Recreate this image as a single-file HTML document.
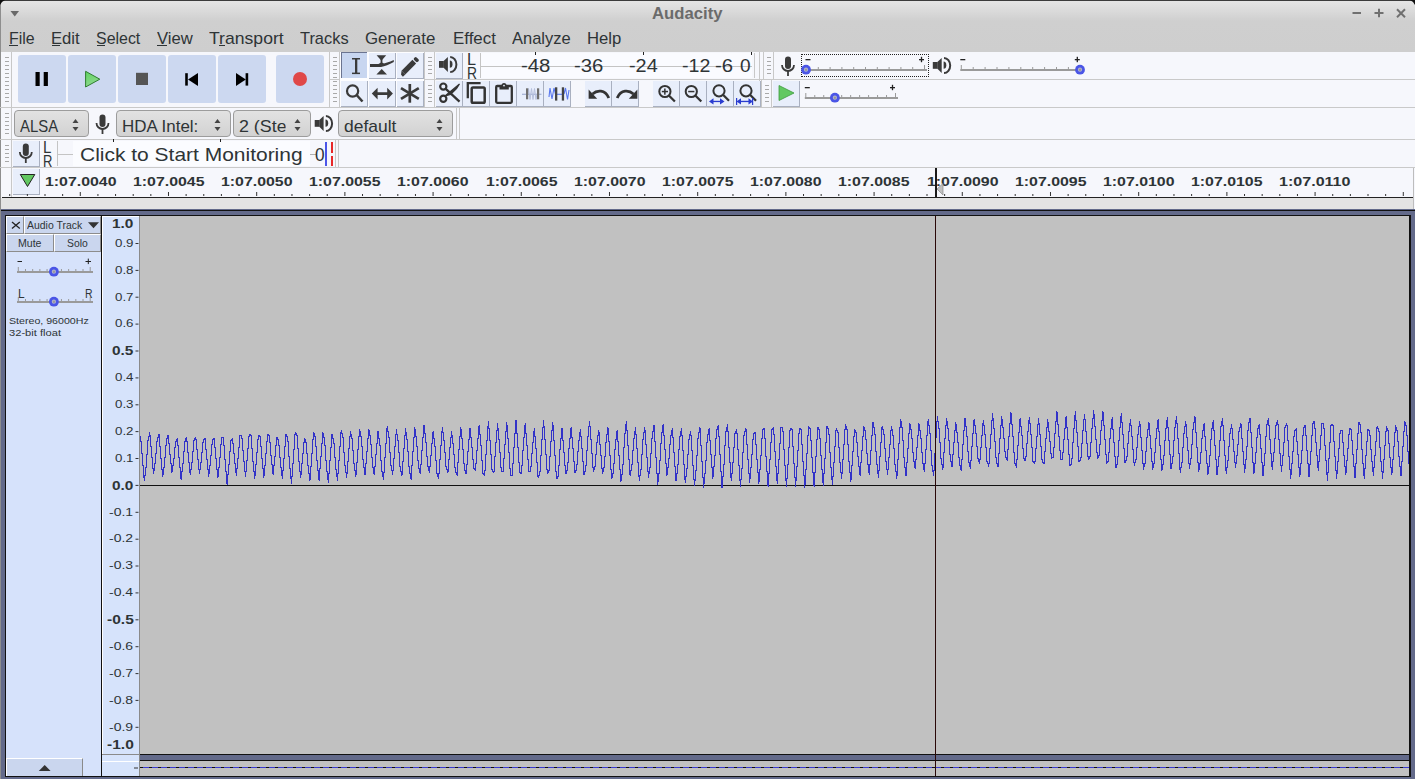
<!DOCTYPE html>
<html><head><meta charset="utf-8"><title>Audacity</title>
<style>
*{margin:0;padding:0;box-sizing:border-box}
html,body{width:1415px;height:779px;overflow:hidden}
body{position:relative;font-family:"Liberation Sans",sans-serif;background:#f6f7fc}
.a{position:absolute}
.t{position:absolute;white-space:pre;transform-origin:0 50%}
.tb{position:absolute;background:#ccd8f0;border-radius:3px}
.tbtn{position:absolute;background:#e8eefb;border-right:1px solid #a9b0c0;border-bottom:1px solid #a9b0c0}
.grab{position:absolute;width:6px;background:repeating-linear-gradient(to bottom,#a8a8a8 0 1px,transparent 1px 4px)}
.vl{position:absolute;width:1px;background:#c8c8c8}
.hl{position:absolute;height:1px;background:#c8c8c8}
.combo{position:absolute;border:1px solid #9c9c9c;border-radius:4px;background:linear-gradient(#e2e2e2,#d2d2d2)}
svg{position:absolute;overflow:visible}
</style></head><body>
<div class="a" style="left:0;top:0;width:1415px;height:52px;background:linear-gradient(#e6e6e6 0px,#e1e1e1 5px,#cfcfcf 21px,#cecece 52px)"></div>
<div class="a" style="left:0;top:0;width:1415px;height:1px;background:#3c3c3c"></div>
<div class="a" style="left:0;top:0;width:1px;height:779px;background:#8e8e8e"></div>
<svg style="left:0;top:0" width="30" height="30"><polygon points="10.5,11 19,11 14.75,16.5" fill="#6a6a6a"/></svg>
<div class="t" style="left:651.50px;top:4.81px;font-size:17px;line-height:17px;font-weight:bold;color:#6b6b6b;transform:scaleX(0.9819);">Audacity</div>
<svg style="left:1340px;top:0" width="75" height="30"><g stroke="#707070" stroke-width="2" fill="none"><line x1="12.5" y1="13" x2="21" y2="13"/><line x1="34.5" y1="13" x2="43.5" y2="13"/><line x1="39" y1="8.8" x2="39" y2="17.2"/><line x1="57" y1="9.3" x2="65" y2="17.3"/><line x1="65" y1="9.3" x2="57" y2="17.3"/></g></svg>
<div class="t" style="left:9.30px;top:30.31px;font-size:17px;line-height:17px;font-weight:normal;color:#2e3436;transform:scaleX(0.9377);">File</div>
<div class="a" style="left:9px;top:45px;width:9px;height:1px;background:#2e3436"></div>
<div class="t" style="left:51.30px;top:30.31px;font-size:17px;line-height:17px;font-weight:normal;color:#2e3436;transform:scaleX(0.9796);">Edit</div>
<div class="a" style="left:51.5px;top:45px;width:8.5px;height:1px;background:#2e3436"></div>
<div class="t" style="left:96.40px;top:30.31px;font-size:17px;line-height:17px;font-weight:normal;color:#2e3436;transform:scaleX(0.9376);">Select</div>
<div class="a" style="left:96.5px;top:45px;width:8.5px;height:1px;background:#2e3436"></div>
<div class="t" style="left:157.00px;top:30.31px;font-size:17px;line-height:17px;font-weight:normal;color:#2e3436;transform:scaleX(0.9796);">View</div>
<div class="a" style="left:157px;top:45px;width:9.5px;height:1px;background:#2e3436"></div>
<div class="t" style="left:209.30px;top:30.31px;font-size:17px;line-height:17px;font-weight:normal;color:#2e3436;transform:scaleX(1.0357);">Transport</div>
<div class="a" style="left:219px;top:45px;width:6px;height:1px;background:#2e3436"></div>
<div class="t" style="left:300.00px;top:30.31px;font-size:17px;line-height:17px;font-weight:normal;color:#2e3436;transform:scaleX(0.9648);">Tracks</div>
<div class="t" style="left:365.40px;top:30.31px;font-size:17px;line-height:17px;font-weight:normal;color:#2e3436;transform:scaleX(0.9917);">Generate</div>
<div class="t" style="left:452.50px;top:30.31px;font-size:17px;line-height:17px;font-weight:normal;color:#2e3436;transform:scaleX(0.9941);">Effect</div>
<div class="t" style="left:511.90px;top:30.31px;font-size:17px;line-height:17px;font-weight:normal;color:#2e3436;transform:scaleX(0.9705);">Analyze</div>
<div class="t" style="left:587.00px;top:30.31px;font-size:17px;line-height:17px;font-weight:normal;color:#2e3436;transform:scaleX(0.9809);">Help</div>
<div class="hl" style="left:330px;top:79px;width:1085px;background:#c9c9c9"></div>
<div class="hl" style="left:0;top:107px;width:1415px;background:#c9c9c9"></div>
<div class="hl" style="left:0;top:139px;width:1415px;background:#c9c9c9"></div>
<div class="hl" style="left:0;top:167px;width:1415px;background:#c9c9c9"></div>
<div class="grab" style="left:5px;top:57px;height:46px;width:4px"></div>
<div class="vl" style="left:11px;top:52px;height:55px"></div>
<div class="tb" style="left:18px;top:55px;width:48px;height:48px"></div>
<div class="tb" style="left:68px;top:55px;width:48px;height:48px"></div>
<div class="tb" style="left:118px;top:55px;width:48px;height:48px"></div>
<div class="tb" style="left:168px;top:55px;width:48px;height:48px"></div>
<div class="tb" style="left:218px;top:55px;width:48px;height:48px"></div>
<div class="tb" style="left:276px;top:55px;width:48px;height:48px"></div>
<div class="vl" style="left:329px;top:52px;height:55px"></div>
<svg style="left:0;top:0" width="330" height="107"><rect x="35.5" y="72" width="4.2" height="14" fill="#000"/><rect x="43.7" y="72" width="4.2" height="14" fill="#000"/><defs><linearGradient id="gg" x1="0" y1="0" x2="0.3" y2="1"><stop offset="0" stop-color="#5fd45f"/><stop offset="1" stop-color="#8ed88e"/></linearGradient></defs><polygon points="85.6,71.3 85.6,87 99.8,79.2" fill="url(#gg)" stroke="#2f7d2f" stroke-width="1"/><rect x="136" y="72.8" width="12" height="12.2" fill="#555"/><rect x="185.2" y="73.2" width="2.6" height="12.4" fill="#000"/><polygon points="188,79.4 198,73 198,86" fill="#000"/><polygon points="236,73 236,86 245.8,79.4" fill="#000"/><rect x="245.6" y="73.2" width="2.6" height="12.4" fill="#000"/><circle cx="300" cy="79" r="7" fill="#e04848"/></svg>
<div class="grab" style="left:333px;top:57px;height:47px;width:4px"></div>
<div class="vl" style="left:339px;top:52px;height:55px"></div>
<div class="a" style="left:340px;top:52px;width:85px;height:55px;background:#fdfdff"></div>
<div class="a" style="left:341px;top:52px;width:26px;height:26px;background:#c8d6f0;border-top:1px solid #6b7490;border-left:1px solid #6b7490"></div>
<div class="tbtn" style="left:369px;top:53px;width:27px;height:26px"></div>
<div class="tbtn" style="left:397px;top:53px;width:27px;height:26px"></div>
<div class="tbtn" style="left:341px;top:81px;width:27px;height:26px"></div>
<div class="tbtn" style="left:369px;top:81px;width:27px;height:26px"></div>
<div class="tbtn" style="left:397px;top:81px;width:27px;height:26px"></div>
<svg style="left:0;top:0" width="430" height="110"><g fill="#3a3a3a"><rect x="355" y="58.5" width="2.3" height="15.4"/><rect x="352" y="58" width="8" height="1.5"/><rect x="352" y="72.6" width="8" height="1.5"/><polygon points="376.6,55.3 386.2,55.3 381.4,60.7"/><polygon points="376.4,74.6 387,74.6 381.7,69"/><rect x="380.6" y="59" width="1.8" height="5"/><polygon points="378,64.2 381.5,62.3 385,64.2"/><path d="M370,64 L381,64 C385,63.5 389,62 393.8,60 L393.8,62 C389,64.5 385,66.5 381,67 L370,67 Z"/></g><g transform="translate(410.0,65.9) rotate(-45) scale(1.1)"><rect x="-8.5" y="-2.4" width="14" height="4.8" fill="#3a3a3a"/><polygon points="-8.5,-2.4 -11.5,0 -11.5,2.4 -8.5,2.4" fill="#3a3a3a"/><rect x="6.5" y="-2.4" width="3.2" height="4.8" rx="1.2" fill="#3a3a3a"/></g><circle cx="352.6" cy="91" r="5.6" fill="none" stroke="#3a3a3a" stroke-width="2.2"/><line x1="356.6" y1="95" x2="362.5" y2="101.5" stroke="#3a3a3a" stroke-width="2.6"/><polygon points="371.8,93.6 377.6,87.8 377.6,92.2 387.2,92.2 387.2,87.8 392.9,93.6 387.2,99.6 387.2,95 377.6,95 377.6,99.6" fill="#3a3a3a"/><g stroke="#3a3a3a" stroke-width="2.7"><line x1="409.8" y1="84" x2="409.8" y2="102.7"/><line x1="401" y1="88.2" x2="418.8" y2="98.8"/><line x1="401" y1="98.8" x2="418.8" y2="88.2"/></g></svg>
<div class="vl" style="left:424px;top:52px;height:55px"></div>
<div class="vl" style="left:434px;top:52px;height:55px"></div>
<div class="grab" style="left:428px;top:57px;height:18px;width:4px"></div>
<div class="grab" style="left:428px;top:85px;height:18px;width:4px"></div>
<div class="tbtn" style="left:436px;top:53px;width:27px;height:26px"></div>
<svg style="left:0;top:0" width="470" height="80"><g transform="translate(0,0)" fill="#3a3a3a"><rect x="439" y="61" width="4.8" height="6.8"/><polygon points="443.6,61 447.9,56.9 447.9,72 443.6,67.8"/><path d="M449.8,60.6 A2.7,3.6 0 0 1 449.8,67.8 Z"/><path d="M450.2,56.9 A6.2,7.6 0 0 1 450.2,72.1" fill="none" stroke="#3a3a3a" stroke-width="2"/></g></svg>
<div class="t" style="left:466.50px;top:51.96px;font-size:16px;line-height:16px;font-weight:normal;color:#2e3436;transform:scaleX(1.0105);">L</div>
<div class="t" style="left:466.50px;top:65.96px;font-size:16px;line-height:16px;font-weight:normal;color:#2e3436;transform:scaleX(0.8649);">R</div>
<div class="vl" style="left:480px;top:53px;height:25px;background:#c4c4c4"></div>
<div class="hl" style="left:480px;top:66px;width:272px;background:#c4c4c4"></div>
<div class="a" style="left:481px;top:53px;width:271px;height:13px;background:#fafbff"></div>
<div class="a" style="left:481px;top:67px;width:271px;height:11px;background:#fafbff"></div>
<div class="t" style="left:520.60px;top:56.66px;font-size:18px;line-height:18px;font-weight:normal;color:#2e3436;transform:scaleX(1.1301);">-48</div>
<div class="t" style="left:574.20px;top:56.66px;font-size:18px;line-height:18px;font-weight:normal;color:#2e3436;transform:scaleX(1.1301);">-36</div>
<div class="t" style="left:628.80px;top:56.66px;font-size:18px;line-height:18px;font-weight:normal;color:#2e3436;transform:scaleX(1.1032);">-24</div>
<div class="t" style="left:682.40px;top:56.66px;font-size:18px;line-height:18px;font-weight:normal;color:#2e3436;transform:scaleX(1.0878);">-12</div>
<div class="t" style="left:715.20px;top:56.66px;font-size:18px;line-height:18px;font-weight:normal;color:#2e3436;transform:scaleX(1.1301);">-6</div>
<div class="t" style="left:739.60px;top:56.66px;font-size:18px;line-height:18px;font-weight:normal;color:#2e3436;transform:scaleX(1.0583);">0</div>
<div class="a" style="left:535px;top:52px;width:1px;height:3px;background:#222"></div>
<div class="a" style="left:643px;top:52px;width:1px;height:3px;background:#222"></div>
<div class="a" style="left:751px;top:52px;width:1px;height:3px;background:#222"></div>
<div class="vl" style="left:754px;top:53px;height:25px"></div>
<div class="vl" style="left:759px;top:52px;height:55px"></div>
<div class="vl" style="left:763px;top:52px;height:27px"></div>
<div class="grab" style="left:767px;top:57px;height:18px;width:4px"></div>
<div class="vl" style="left:773px;top:52px;height:27px"></div>
<svg style="left:0;top:0" width="1100" height="110"><g transform="translate(788,66.5) scale(1.0)"><rect x="-3" y="-10" width="6" height="12.5" rx="3" fill="#3a3a3a"/><path d="M-6,-1.5 A6,6 0 0 0 6,-1.5" fill="none" stroke="#3a3a3a" stroke-width="1.8"/><rect x="-0.9" y="4" width="1.8" height="5.5" fill="#3a3a3a"/></g><g transform="translate(493.8,1.0)" fill="#3a3a3a"><rect x="439" y="61" width="4.8" height="6.8"/><polygon points="443.6,61 447.9,56.9 447.9,72 443.6,67.8"/><path d="M449.8,60.6 A2.7,3.6 0 0 1 449.8,67.8 Z"/><path d="M450.2,56.9 A6.2,7.6 0 0 1 450.2,72.1" fill="none" stroke="#3a3a3a" stroke-width="2"/></g></svg>
<div class="a" style="left:801px;top:54px;width:128px;height:23px;border:1px dotted #222"></div>
<svg style="left:0;top:0" width="1100" height="110"><rect x="805.50" y="69" width="121.50" height="2" fill="#9a9a9a"/><rect x="806.00" y="65" width="1" height="4" fill="#9a9a9a"/><rect x="817.80" y="67" width="1" height="2" fill="#9a9a9a"/><rect x="829.60" y="67" width="1" height="2" fill="#9a9a9a"/><rect x="841.40" y="67" width="1" height="2" fill="#9a9a9a"/><rect x="853.20" y="67" width="1" height="2" fill="#9a9a9a"/><rect x="865.00" y="67" width="1" height="2" fill="#9a9a9a"/><rect x="876.80" y="67" width="1" height="2" fill="#9a9a9a"/><rect x="888.60" y="67" width="1" height="2" fill="#9a9a9a"/><rect x="900.40" y="67" width="1" height="2" fill="#9a9a9a"/><rect x="912.20" y="67" width="1" height="2" fill="#9a9a9a"/><rect x="924.00" y="65" width="1" height="4" fill="#9a9a9a"/><rect x="805.50" y="59" width="5" height="1.3" fill="#222"/><rect x="919.00" y="59" width="5" height="1.3" fill="#222"/><rect x="920.85" y="56.8" width="1.3" height="5.4" fill="#222"/><circle cx="806" cy="69.7" r="4.9" fill="#4a55e6"/><circle cx="806" cy="69.7" r="2.1" fill="#b4b8d0"/><circle cx="806" cy="69.7" r="1.2" fill="#9a9a9a"/><rect x="960.30" y="69" width="122.50" height="2" fill="#9a9a9a"/><rect x="960.80" y="65" width="1" height="4" fill="#9a9a9a"/><rect x="972.70" y="67" width="1" height="2" fill="#9a9a9a"/><rect x="984.60" y="67" width="1" height="2" fill="#9a9a9a"/><rect x="996.50" y="67" width="1" height="2" fill="#9a9a9a"/><rect x="1008.40" y="67" width="1" height="2" fill="#9a9a9a"/><rect x="1020.30" y="67" width="1" height="2" fill="#9a9a9a"/><rect x="1032.20" y="67" width="1" height="2" fill="#9a9a9a"/><rect x="1044.10" y="67" width="1" height="2" fill="#9a9a9a"/><rect x="1056.00" y="67" width="1" height="2" fill="#9a9a9a"/><rect x="1067.90" y="67" width="1" height="2" fill="#9a9a9a"/><rect x="1079.80" y="65" width="1" height="4" fill="#9a9a9a"/><rect x="960.30" y="59" width="5" height="1.3" fill="#222"/><rect x="1074.80" y="59" width="5" height="1.3" fill="#222"/><rect x="1076.65" y="56.8" width="1.3" height="5.4" fill="#222"/><circle cx="1080" cy="69.7" r="4.9" fill="#4a55e6"/><circle cx="1080" cy="69.7" r="2.1" fill="#b4b8d0"/><circle cx="1080" cy="69.7" r="1.2" fill="#9a9a9a"/><rect x="804.80" y="97" width="93.20" height="2" fill="#9a9a9a"/><rect x="805.30" y="93" width="1" height="4" fill="#9a9a9a"/><rect x="814.27" y="95" width="1" height="2" fill="#9a9a9a"/><rect x="823.24" y="95" width="1" height="2" fill="#9a9a9a"/><rect x="832.21" y="95" width="1" height="2" fill="#9a9a9a"/><rect x="841.18" y="95" width="1" height="2" fill="#9a9a9a"/><rect x="850.15" y="95" width="1" height="2" fill="#9a9a9a"/><rect x="859.12" y="95" width="1" height="2" fill="#9a9a9a"/><rect x="868.09" y="95" width="1" height="2" fill="#9a9a9a"/><rect x="877.06" y="95" width="1" height="2" fill="#9a9a9a"/><rect x="886.03" y="95" width="1" height="2" fill="#9a9a9a"/><rect x="895.00" y="93" width="1" height="4" fill="#9a9a9a"/><rect x="804.80" y="87" width="5" height="1.3" fill="#222"/><rect x="890.00" y="87" width="5" height="1.3" fill="#222"/><rect x="891.85" y="84.8" width="1.3" height="5.4" fill="#222"/><circle cx="834.9" cy="97.7" r="4.9" fill="#4a55e6"/><circle cx="834.9" cy="97.7" r="2.1" fill="#b4b8d0"/><circle cx="834.9" cy="97.7" r="1.2" fill="#9a9a9a"/></svg>
<div class="tbtn" style="left:436px;top:81px;width:27px;height:26px"></div>
<div class="tbtn" style="left:463px;top:81px;width:27px;height:26px"></div>
<div class="tbtn" style="left:490px;top:81px;width:27px;height:26px"></div>
<div class="tbtn" style="left:517px;top:81px;width:27px;height:26px"></div>
<div class="tbtn" style="left:544px;top:81px;width:27px;height:26px"></div>
<div class="tbtn" style="left:585px;top:81px;width:27px;height:26px"></div>
<div class="tbtn" style="left:612px;top:81px;width:27px;height:26px"></div>
<svg style="left:0;top:0" width="660" height="110"><g fill="none" stroke="#333" stroke-width="2.2"><circle cx="443.3" cy="86.6" r="3.1"/><circle cx="443.3" cy="98.8" r="3.1"/></g><line x1="445.5" y1="88.6" x2="459.5" y2="101.7" stroke="#333" stroke-width="2.3"/><polygon points="445,96 459.5,84 456.5,88.5 450.5,94.5" fill="#333" stroke="#333" stroke-width="1.2"/><path d="M467.8,98.2 L467.8,83.2 L480.6,83.2" fill="none" stroke="#333" stroke-width="2.3"/><rect x="471.7" y="87.5" width="13" height="15.3" rx="1.3" fill="none" stroke="#333" stroke-width="2.5"/><rect x="496.2" y="86" width="15.6" height="16.8" rx="1" fill="none" stroke="#333" stroke-width="2.3"/><rect x="499.5" y="85.5" width="9.3" height="4" fill="#333"/><circle cx="504" cy="85.6" r="2.5" fill="#333"/><circle cx="504" cy="85.6" r="0.9" fill="#e8eefb"/><line x1="522" y1="94.3" x2="541.5" y2="94.3" stroke="#a3b0d3" stroke-width="1.2"/><path d="M528,94 L528.5,88.5 L530,99.5 L531.5,88.5 L533,99.5 L534.5,88.5 L536,99.5 L537,94" fill="none" stroke="#b6c0de" stroke-width="1"/><rect x="526" y="88.3" width="2.2" height="11" fill="#6f6f6f"/><rect x="537" y="88.3" width="2.2" height="11" fill="#6f6f6f"/><path d="M549,97 L550,88 L552,99 L554,88 L555.5,94 M564,94 L565.5,88 L567.5,99.5 L569,90" fill="none" stroke="#5877ee" stroke-width="1.1"/><line x1="557" y1="94.3" x2="562" y2="94.3" stroke="#5877ee" stroke-width="1.1"/><rect x="555" y="87.3" width="2.3" height="13.3" fill="#444"/><rect x="561.8" y="87.3" width="2.3" height="13.3" fill="#444"/><path d="M592.5,94 C597,89.8 605,89.3 608.8,98" fill="none" stroke="#333" stroke-width="2.8"/><polygon points="588.6,89.6 588.6,98.8 597.2,98.8" fill="#333"/><path d="M633.5,94 C629,89.8 621,89.3 617.2,98" fill="none" stroke="#333" stroke-width="2.8"/><polygon points="637.4,89.6 637.4,98.8 628.8,98.8" fill="#333"/></svg>
<div class="tbtn" style="left:653px;top:81px;width:27px;height:26px"></div>
<div class="tbtn" style="left:680px;top:81px;width:27px;height:26px"></div>
<div class="tbtn" style="left:707px;top:81px;width:27px;height:26px"></div>
<div class="tbtn" style="left:734px;top:81px;width:27px;height:26px"></div>
<svg style="left:0;top:0" width="780" height="110"><circle cx="664.9" cy="91.5" r="5.6" fill="none" stroke="#333" stroke-width="2"/><line x1="668.9" y1="95.5" x2="674.9" y2="101.5" stroke="#333" stroke-width="2.3"/><circle cx="691.3" cy="91.5" r="5.6" fill="none" stroke="#333" stroke-width="2"/><line x1="695.3" y1="95.5" x2="701.3" y2="101.5" stroke="#333" stroke-width="2.3"/><circle cx="719" cy="90.8" r="5.6" fill="none" stroke="#333" stroke-width="2"/><line x1="723" y1="94.8" x2="729" y2="100.8" stroke="#333" stroke-width="2.3"/><circle cx="746" cy="90.8" r="5.6" fill="none" stroke="#333" stroke-width="2"/><line x1="750" y1="94.8" x2="756" y2="100.8" stroke="#333" stroke-width="2.3"/><rect x="661.8" y="90.8" width="6.2" height="1.5" fill="#333"/><rect x="664.1" y="88.5" width="1.5" height="6.2" fill="#333"/><rect x="688.2" y="90.8" width="6.2" height="1.5" fill="#333"/><g fill="#2a3cd0"><rect x="711" y="100.8" width="12" height="1.3"/><polygon points="709,101.4 713.5,98.3 713.5,104.5"/><polygon points="724.5,101.4 720,98.3 720,104.5"/><rect x="740" y="100.8" width="10" height="1.3"/><polygon points="736.5,101.4 741,98.3 741,104.5"/><polygon points="753,101.4 748.5,98.3 748.5,104.5"/><rect x="736" y="98" width="1.2" height="7"/><rect x="752" y="98" width="1.2" height="7"/></g></svg>
<div class="vl" style="left:761px;top:80px;height:27px"></div>
<div class="grab" style="left:765px;top:85px;height:18px;width:4px"></div>
<div class="vl" style="left:771px;top:80px;height:27px"></div>
<div class="tbtn" style="left:773px;top:81px;width:27px;height:26px"></div>
<svg style="left:0;top:0" width="800" height="110"><polygon points="779,85.5 779,100.5 794,93" fill="#62c862" stroke="#3d9a3d" stroke-width="0.8"/></svg>
<div class="grab" style="left:5px;top:113px;height:22px;width:4px"></div>
<div class="vl" style="left:11px;top:108px;height:59px"></div>
<div class="combo" style="left:14px;top:110px;width:75px;height:27px"></div>
<div class="t" style="left:19.50px;top:117.61px;font-size:17px;line-height:17px;font-weight:normal;color:#2e3436;transform:scaleX(0.8762);">ALSA</div>
<svg style="left:0;top:0" width="10" height="10"><polygon points="72.5,123 78.5,123 75.5,119" fill="#444"/><polygon points="72.5,127 78.5,127 75.5,131" fill="#444"/></svg>
<div class="combo" style="left:116px;top:110px;width:115px;height:27px"></div>
<div class="t" style="left:122.00px;top:117.61px;font-size:17px;line-height:17px;font-weight:normal;color:#2e3436;transform:scaleX(0.9968);">HDA Intel:</div>
<svg style="left:0;top:0" width="10" height="10"><polygon points="214.5,123 220.5,123 217.5,119" fill="#444"/><polygon points="214.5,127 220.5,127 217.5,131" fill="#444"/></svg>
<div class="combo" style="left:233px;top:110px;width:78px;height:27px"></div>
<div class="t" style="left:238.50px;top:117.61px;font-size:17px;line-height:17px;font-weight:normal;color:#2e3436;transform:scaleX(1.0484);clip-path:inset(0 6.5px 0 0);">2 (Ster</div>
<svg style="left:0;top:0" width="10" height="10"><polygon points="294.5,123 300.5,123 297.5,119" fill="#444"/><polygon points="294.5,127 300.5,127 297.5,131" fill="#444"/></svg>
<div class="combo" style="left:338px;top:110px;width:115px;height:27px"></div>
<div class="t" style="left:343.70px;top:117.61px;font-size:17px;line-height:17px;font-weight:normal;color:#2e3436;transform:scaleX(1.0265);">default</div>
<svg style="left:0;top:0" width="10" height="10"><polygon points="436.5,123 442.5,123 439.5,119" fill="#444"/><polygon points="436.5,127 442.5,127 439.5,131" fill="#444"/></svg>
<svg style="left:0;top:0" width="460" height="140"><g transform="translate(102.5,124.5) scale(1.0)"><rect x="-3" y="-10" width="6" height="12.5" rx="3" fill="#3a3a3a"/><path d="M-6,-1.5 A6,6 0 0 0 6,-1.5" fill="none" stroke="#3a3a3a" stroke-width="1.8"/><rect x="-0.9" y="4" width="1.8" height="5.5" fill="#3a3a3a"/></g><g transform="translate(-124.3,59.0)" fill="#3a3a3a"><rect x="439" y="61" width="4.8" height="6.8"/><polygon points="443.6,61 447.9,56.9 447.9,72 443.6,67.8"/><path d="M449.8,60.6 A2.7,3.6 0 0 1 449.8,67.8 Z"/><path d="M450.2,56.9 A6.2,7.6 0 0 1 450.2,72.1" fill="none" stroke="#3a3a3a" stroke-width="2"/></g></svg>
<div class="vl" style="left:456px;top:108px;height:31px"></div>
<div class="vl" style="left:459px;top:108px;height:31px"></div>
<div class="grab" style="left:5px;top:145px;height:18px;width:4px"></div>
<div class="tbtn" style="left:13px;top:141px;width:27px;height:26px"></div>
<svg style="left:0;top:0" width="60" height="170"><g transform="translate(25.8,153.5) scale(1.0)"><rect x="-3" y="-10" width="6" height="12.5" rx="3" fill="#3a3a3a"/><path d="M-6,-1.5 A6,6 0 0 0 6,-1.5" fill="none" stroke="#3a3a3a" stroke-width="1.8"/><rect x="-0.9" y="4" width="1.8" height="5.5" fill="#3a3a3a"/></g></svg>
<div class="t" style="left:43.30px;top:139.11px;font-size:17px;line-height:17px;font-weight:normal;color:#2e3436;transform:scaleX(0.8871);">L</div>
<div class="t" style="left:43.30px;top:153.11px;font-size:17px;line-height:17px;font-weight:normal;color:#2e3436;transform:scaleX(0.7654);">R</div>
<div class="vl" style="left:57px;top:141px;height:25px;background:#c4c4c4"></div>
<div class="hl" style="left:57px;top:154px;width:16px;background:#c4c4c4"></div>
<div class="a" style="left:73px;top:141px;width:237px;height:25px;background:#fbfcff"></div>
<div class="t" style="left:80.10px;top:144.82px;font-size:19px;line-height:19px;font-weight:normal;color:#2e3436;transform:scaleX(1.1037);">Click to Start Monitoring</div>
<div class="hl" style="left:310px;top:154px;width:6px;background:#b0b0b0"></div>
<div class="t" style="left:314.80px;top:145.96px;font-size:18px;line-height:18px;font-weight:normal;color:#2e3436;transform:scaleX(0.9585);">0</div>
<div class="a" style="left:325px;top:142px;width:2px;height:24px;background:#4a55e8"></div>
<div class="a" style="left:330.5px;top:142px;width:2px;height:11px;background:#e82828"></div>
<div class="a" style="left:330.5px;top:156px;width:2px;height:10px;background:#e82828"></div>
<div class="a" style="left:112.5px;top:139px;width:1px;height:3px;background:#222"></div>
<div class="a" style="left:220px;top:139px;width:1px;height:3px;background:#222"></div>
<div class="vl" style="left:335px;top:140px;height:27px"></div>
<div class="vl" style="left:338px;top:140px;height:27px"></div>
<div class="vl" style="left:11px;top:168px;height:29px"></div>
<div class="tbtn" style="left:13px;top:169px;width:27px;height:26px"></div>
<svg style="left:0;top:0" width="60" height="200"><polygon points="20.3,174.5 34.8,174.5 27.5,186.5" fill="#62c862" stroke="#222" stroke-width="1"/></svg>
<div class="t" style="left:44.50px;top:176.20px;font-size:12.4px;line-height:12.4px;font-weight:bold;color:#2e3436;transform:scaleX(1.2811);">1:07.0040</div>
<div class="t" style="left:132.70px;top:176.20px;font-size:12.4px;line-height:12.4px;font-weight:bold;color:#2e3436;transform:scaleX(1.2811);">1:07.0045</div>
<div class="t" style="left:220.90px;top:176.20px;font-size:12.4px;line-height:12.4px;font-weight:bold;color:#2e3436;transform:scaleX(1.2811);">1:07.0050</div>
<div class="t" style="left:309.10px;top:176.20px;font-size:12.4px;line-height:12.4px;font-weight:bold;color:#2e3436;transform:scaleX(1.2811);">1:07.0055</div>
<div class="t" style="left:397.30px;top:176.20px;font-size:12.4px;line-height:12.4px;font-weight:bold;color:#2e3436;transform:scaleX(1.2811);">1:07.0060</div>
<div class="t" style="left:485.50px;top:176.20px;font-size:12.4px;line-height:12.4px;font-weight:bold;color:#2e3436;transform:scaleX(1.2811);">1:07.0065</div>
<div class="t" style="left:573.70px;top:176.20px;font-size:12.4px;line-height:12.4px;font-weight:bold;color:#2e3436;transform:scaleX(1.2811);">1:07.0070</div>
<div class="t" style="left:661.90px;top:176.20px;font-size:12.4px;line-height:12.4px;font-weight:bold;color:#2e3436;transform:scaleX(1.2811);">1:07.0075</div>
<div class="t" style="left:750.10px;top:176.20px;font-size:12.4px;line-height:12.4px;font-weight:bold;color:#2e3436;transform:scaleX(1.2811);">1:07.0080</div>
<div class="t" style="left:838.30px;top:176.20px;font-size:12.4px;line-height:12.4px;font-weight:bold;color:#2e3436;transform:scaleX(1.2811);">1:07.0085</div>
<div class="t" style="left:926.50px;top:176.20px;font-size:12.4px;line-height:12.4px;font-weight:bold;color:#2e3436;transform:scaleX(1.2811);">1:07.0090</div>
<div class="t" style="left:1014.70px;top:176.20px;font-size:12.4px;line-height:12.4px;font-weight:bold;color:#2e3436;transform:scaleX(1.2811);">1:07.0095</div>
<div class="t" style="left:1102.90px;top:176.20px;font-size:12.4px;line-height:12.4px;font-weight:bold;color:#2e3436;transform:scaleX(1.2811);">1:07.0100</div>
<div class="t" style="left:1191.10px;top:176.20px;font-size:12.4px;line-height:12.4px;font-weight:bold;color:#2e3436;transform:scaleX(1.2811);">1:07.0105</div>
<div class="t" style="left:1279.30px;top:176.20px;font-size:12.4px;line-height:12.4px;font-weight:bold;color:#2e3436;transform:scaleX(1.2971);">1:07.0110</div>
<svg style="left:0;top:0" width="1415" height="200"><rect x="9.22" y="194" width="1" height="2" fill="#333"/><rect x="26.86" y="194" width="1" height="2" fill="#333"/><rect x="44.50" y="194" width="1" height="2" fill="#333"/><rect x="62.14" y="194" width="1" height="2" fill="#333"/><rect x="79.78" y="192" width="1" height="4" fill="#333"/><rect x="97.42" y="194" width="1" height="2" fill="#333"/><rect x="115.06" y="194" width="1" height="2" fill="#333"/><rect x="132.70" y="194" width="1" height="2" fill="#333"/><rect x="150.34" y="194" width="1" height="2" fill="#333"/><rect x="167.98" y="192" width="1" height="4" fill="#333"/><rect x="185.62" y="194" width="1" height="2" fill="#333"/><rect x="203.26" y="194" width="1" height="2" fill="#333"/><rect x="220.90" y="194" width="1" height="2" fill="#333"/><rect x="238.54" y="194" width="1" height="2" fill="#333"/><rect x="256.18" y="192" width="1" height="4" fill="#333"/><rect x="273.82" y="194" width="1" height="2" fill="#333"/><rect x="291.46" y="194" width="1" height="2" fill="#333"/><rect x="309.10" y="194" width="1" height="2" fill="#333"/><rect x="326.74" y="194" width="1" height="2" fill="#333"/><rect x="344.38" y="192" width="1" height="4" fill="#333"/><rect x="362.02" y="194" width="1" height="2" fill="#333"/><rect x="379.66" y="194" width="1" height="2" fill="#333"/><rect x="397.30" y="194" width="1" height="2" fill="#333"/><rect x="414.94" y="194" width="1" height="2" fill="#333"/><rect x="432.58" y="192" width="1" height="4" fill="#333"/><rect x="450.22" y="194" width="1" height="2" fill="#333"/><rect x="467.86" y="194" width="1" height="2" fill="#333"/><rect x="485.50" y="194" width="1" height="2" fill="#333"/><rect x="503.14" y="194" width="1" height="2" fill="#333"/><rect x="520.78" y="192" width="1" height="4" fill="#333"/><rect x="538.42" y="194" width="1" height="2" fill="#333"/><rect x="556.06" y="194" width="1" height="2" fill="#333"/><rect x="573.70" y="194" width="1" height="2" fill="#333"/><rect x="591.34" y="194" width="1" height="2" fill="#333"/><rect x="608.98" y="192" width="1" height="4" fill="#333"/><rect x="626.62" y="194" width="1" height="2" fill="#333"/><rect x="644.26" y="194" width="1" height="2" fill="#333"/><rect x="661.90" y="194" width="1" height="2" fill="#333"/><rect x="679.54" y="194" width="1" height="2" fill="#333"/><rect x="697.18" y="192" width="1" height="4" fill="#333"/><rect x="714.82" y="194" width="1" height="2" fill="#333"/><rect x="732.46" y="194" width="1" height="2" fill="#333"/><rect x="750.10" y="194" width="1" height="2" fill="#333"/><rect x="767.74" y="194" width="1" height="2" fill="#333"/><rect x="785.38" y="192" width="1" height="4" fill="#333"/><rect x="803.02" y="194" width="1" height="2" fill="#333"/><rect x="820.66" y="194" width="1" height="2" fill="#333"/><rect x="838.30" y="194" width="1" height="2" fill="#333"/><rect x="855.94" y="194" width="1" height="2" fill="#333"/><rect x="873.58" y="192" width="1" height="4" fill="#333"/><rect x="891.22" y="194" width="1" height="2" fill="#333"/><rect x="908.86" y="194" width="1" height="2" fill="#333"/><rect x="926.50" y="194" width="1" height="2" fill="#333"/><rect x="944.14" y="194" width="1" height="2" fill="#333"/><rect x="961.78" y="192" width="1" height="4" fill="#333"/><rect x="979.42" y="194" width="1" height="2" fill="#333"/><rect x="997.06" y="194" width="1" height="2" fill="#333"/><rect x="1014.70" y="194" width="1" height="2" fill="#333"/><rect x="1032.34" y="194" width="1" height="2" fill="#333"/><rect x="1049.98" y="192" width="1" height="4" fill="#333"/><rect x="1067.62" y="194" width="1" height="2" fill="#333"/><rect x="1085.26" y="194" width="1" height="2" fill="#333"/><rect x="1102.90" y="194" width="1" height="2" fill="#333"/><rect x="1120.54" y="194" width="1" height="2" fill="#333"/><rect x="1138.18" y="192" width="1" height="4" fill="#333"/><rect x="1155.82" y="194" width="1" height="2" fill="#333"/><rect x="1173.46" y="194" width="1" height="2" fill="#333"/><rect x="1191.10" y="194" width="1" height="2" fill="#333"/><rect x="1208.74" y="194" width="1" height="2" fill="#333"/><rect x="1226.38" y="192" width="1" height="4" fill="#333"/><rect x="1244.02" y="194" width="1" height="2" fill="#333"/><rect x="1261.66" y="194" width="1" height="2" fill="#333"/><rect x="1279.30" y="194" width="1" height="2" fill="#333"/><rect x="1296.94" y="194" width="1" height="2" fill="#333"/><rect x="1314.58" y="192" width="1" height="4" fill="#333"/><rect x="1332.22" y="194" width="1" height="2" fill="#333"/><rect x="1349.86" y="194" width="1" height="2" fill="#333"/><rect x="1367.50" y="194" width="1" height="2" fill="#333"/><rect x="1385.14" y="194" width="1" height="2" fill="#333"/><rect x="1402.78" y="192" width="1" height="4" fill="#333"/></svg>
<div class="a" style="left:2px;top:197px;width:1413px;height:1px;background:#222"></div>
<div class="a" style="left:934.5px;top:168px;width:2px;height:29px;background:#1a1a1a"></div>
<svg style="left:0;top:0" width="1415" height="200"><polygon points="937,189 943,183.5 943,195" fill="#c0c0c0" stroke="#8a8a8a" stroke-width="0.7"/></svg>
<div class="a" style="left:1px;top:198px;width:1414px;height:11px;background:#e3e3e3"></div>
<div class="a" style="left:1px;top:209px;width:1414px;height:570px;background:#636a8a"></div>
<div class="a" style="left:1px;top:209.5px;width:1414px;height:1.5px;background:#111"></div>
<div class="a" style="left:5px;top:215px;width:1406px;height:562px;background:#111"></div>
<div class="a" style="left:6px;top:216px;width:95px;height:560px;background:#d6e2fb"></div>
<div class="a" style="left:6px;top:216px;width:18px;height:18px;background:#cad6ee;border-top:1px solid #fff;border-left:1px solid #fff;border-right:1px solid #8c8c8c;border-bottom:1px solid #8c8c8c"></div>
<div class="a" style="left:24px;top:216px;width:77px;height:18px;background:#cad6ee;border-top:1px solid #fff;border-left:1px solid #fff;border-right:1px solid #8c8c8c;border-bottom:1px solid #8c8c8c"></div>
<svg style="left:0;top:0" width="110" height="240"><g stroke="#222" stroke-width="1.3"><line x1="12" y1="222" x2="19.8" y2="228.5"/><line x1="19.8" y1="222" x2="12" y2="228.5"/></g><polygon points="88,222.2 99,222.2 93.5,228.3" fill="#333"/></svg>
<div class="t" style="left:27.00px;top:219.71px;font-size:10.5px;line-height:10.5px;font-weight:normal;color:#2e3436;transform:scaleX(0.9954);">Audio Track</div>
<div class="a" style="left:6px;top:234px;width:48px;height:18px;background:#cad6ee;border-top:1px solid #fff;border-left:1px solid #fff;border-right:1px solid #8c8c8c;border-bottom:1px solid #8c8c8c"></div>
<div class="a" style="left:54px;top:234px;width:47px;height:18px;background:#cad6ee;border-top:1px solid #fff;border-left:1px solid #fff;border-right:1px solid #8c8c8c;border-bottom:1px solid #8c8c8c"></div>
<div class="t" style="left:18.30px;top:237.81px;font-size:10.5px;line-height:10.5px;font-weight:normal;color:#2e3436;transform:scaleX(1.0067);">Mute</div>
<div class="t" style="left:66.80px;top:237.81px;font-size:10.5px;line-height:10.5px;font-weight:normal;color:#2e3436;transform:scaleX(0.9850);">Solo</div>
<svg style="left:0;top:0" width="110" height="320"><rect x="17.00" y="271" width="76.00" height="2" fill="#9a9a9a"/><rect x="17.80" y="267" width="1" height="4" fill="#9a9a9a"/><rect x="24.99" y="269" width="1" height="2" fill="#9a9a9a"/><rect x="32.18" y="269" width="1" height="2" fill="#9a9a9a"/><rect x="39.37" y="269" width="1" height="2" fill="#9a9a9a"/><rect x="46.56" y="269" width="1" height="2" fill="#9a9a9a"/><rect x="53.75" y="269" width="1" height="2" fill="#9a9a9a"/><rect x="60.94" y="269" width="1" height="2" fill="#9a9a9a"/><rect x="68.13" y="269" width="1" height="2" fill="#9a9a9a"/><rect x="75.32" y="269" width="1" height="2" fill="#9a9a9a"/><rect x="82.51" y="269" width="1" height="2" fill="#9a9a9a"/><rect x="89.70" y="267" width="1" height="4" fill="#9a9a9a"/><circle cx="53.9" cy="271.7" r="4.9" fill="#4a55e6"/><circle cx="53.9" cy="271.7" r="2.1" fill="#b4b8d0"/><circle cx="53.9" cy="271.7" r="1.2" fill="#9a9a9a"/><rect x="17.00" y="301" width="76.00" height="2" fill="#9a9a9a"/><rect x="17.80" y="297" width="1" height="4" fill="#9a9a9a"/><rect x="24.99" y="299" width="1" height="2" fill="#9a9a9a"/><rect x="32.18" y="299" width="1" height="2" fill="#9a9a9a"/><rect x="39.37" y="299" width="1" height="2" fill="#9a9a9a"/><rect x="46.56" y="299" width="1" height="2" fill="#9a9a9a"/><rect x="53.75" y="299" width="1" height="2" fill="#9a9a9a"/><rect x="60.94" y="299" width="1" height="2" fill="#9a9a9a"/><rect x="68.13" y="299" width="1" height="2" fill="#9a9a9a"/><rect x="75.32" y="299" width="1" height="2" fill="#9a9a9a"/><rect x="82.51" y="299" width="1" height="2" fill="#9a9a9a"/><rect x="89.70" y="297" width="1" height="4" fill="#9a9a9a"/><circle cx="53.9" cy="301.7" r="4.9" fill="#4a55e6"/><circle cx="53.9" cy="301.7" r="2.1" fill="#b4b8d0"/><circle cx="53.9" cy="301.7" r="1.2" fill="#9a9a9a"/><rect x="17.5" y="261" width="4.5" height="1" fill="#222"/><rect x="85.5" y="261" width="5.5" height="1" fill="#222"/><rect x="87.8" y="258.6" width="1" height="5.5" fill="#222"/></svg>
<div class="t" style="left:17.80px;top:287.62px;font-size:12.5px;line-height:12.5px;font-weight:normal;color:#2e3436;transform:scaleX(0.9492);">L</div>
<div class="t" style="left:85.20px;top:287.62px;font-size:12.5px;line-height:12.5px;font-weight:normal;color:#2e3436;transform:scaleX(0.8415);">R</div>
<div class="t" style="left:9.10px;top:316.93px;font-size:9.3px;line-height:9.3px;font-weight:normal;color:#2e3436;transform:scaleX(1.1421);">Stereo, 96000Hz</div>
<div class="t" style="left:9.10px;top:328.53px;font-size:9.3px;line-height:9.3px;font-weight:normal;color:#2e3436;transform:scaleX(1.1976);">32-bit float</div>
<div class="a" style="left:6px;top:758px;width:77px;height:18px;background:#cad6ee;border-top:1px solid #fff;border-left:1px solid #fff;border-right:1px solid #8a8a8a"></div>
<svg style="left:0;top:0" width="110" height="779"><polygon points="38.8,771 50.6,771 44.7,765" fill="#333"/></svg>
<div class="a" style="left:102px;top:216px;width:38px;height:538px;background:#d6e3fb;border-top:1px solid #fff;border-left:1px solid #fff"></div>
<div class="a" style="left:102px;top:755px;width:1px;height:21px;background:#fff"></div>
<div class="a" style="left:102px;top:754px;width:38px;height:1px;background:#8a8a8a"></div>
<div class="a" style="left:102px;top:755px;width:38px;height:6px;background:#d6e3fb"></div>
<div class="a" style="left:102px;top:761px;width:38px;height:1px;background:#fff"></div>
<div class="a" style="left:102px;top:762px;width:38px;height:14px;background:#d6e3fb"></div>
<div class="a" style="left:139px;top:216px;width:1px;height:560px;background:#8a8a8a"></div>
<svg style="left:0;top:0" width="140" height="779"><rect x="135.5" y="726.8" width="3" height="1" fill="#333"/><rect x="135.5" y="699.9" width="3" height="1" fill="#333"/><rect x="135.5" y="673.1" width="3" height="1" fill="#333"/><rect x="135.5" y="646.2" width="3" height="1" fill="#333"/><rect x="135.5" y="619.3" width="3" height="1" fill="#333"/><rect x="135.5" y="592.4" width="3" height="1" fill="#333"/><rect x="135.5" y="565.5" width="3" height="1" fill="#333"/><rect x="135.5" y="538.7" width="3" height="1" fill="#333"/><rect x="135.5" y="511.8" width="3" height="1" fill="#333"/><rect x="135.5" y="484.9" width="3" height="1" fill="#333"/><rect x="135.5" y="458.0" width="3" height="1" fill="#333"/><rect x="135.5" y="431.1" width="3" height="1" fill="#333"/><rect x="135.5" y="404.3" width="3" height="1" fill="#333"/><rect x="135.5" y="377.4" width="3" height="1" fill="#333"/><rect x="135.5" y="350.5" width="3" height="1" fill="#333"/><rect x="135.5" y="323.6" width="3" height="1" fill="#333"/><rect x="135.5" y="296.7" width="3" height="1" fill="#333"/><rect x="135.5" y="269.9" width="3" height="1" fill="#333"/><rect x="135.5" y="243.0" width="3" height="1" fill="#333"/><rect x="134" y="767.5" width="4" height="1" fill="#333"/></svg>
<div class="t" style="left:106.60px;top:739.34px;font-size:12px;line-height:12px;font-weight:bold;color:#2e3436;transform:scaleX(1.2955);">-1.0</div>
<div class="t" style="left:109.20px;top:721.63px;font-size:11.8px;line-height:11.8px;font-weight:normal;color:#2e3436;transform:scaleX(1.1855);">-0.9</div>
<div class="t" style="left:109.20px;top:694.75px;font-size:11.8px;line-height:11.8px;font-weight:normal;color:#2e3436;transform:scaleX(1.1855);">-0.8</div>
<div class="t" style="left:109.20px;top:667.87px;font-size:11.8px;line-height:11.8px;font-weight:normal;color:#2e3436;transform:scaleX(1.1855);">-0.7</div>
<div class="t" style="left:109.20px;top:640.99px;font-size:11.8px;line-height:11.8px;font-weight:normal;color:#2e3436;transform:scaleX(1.1855);">-0.6</div>
<div class="t" style="left:106.60px;top:613.94px;font-size:12px;line-height:12px;font-weight:bold;color:#2e3436;transform:scaleX(1.2955);">-0.5</div>
<div class="t" style="left:109.20px;top:587.23px;font-size:11.8px;line-height:11.8px;font-weight:normal;color:#2e3436;transform:scaleX(1.1855);">-0.4</div>
<div class="t" style="left:109.20px;top:560.35px;font-size:11.8px;line-height:11.8px;font-weight:normal;color:#2e3436;transform:scaleX(1.1855);">-0.3</div>
<div class="t" style="left:109.20px;top:533.47px;font-size:11.8px;line-height:11.8px;font-weight:normal;color:#2e3436;transform:scaleX(1.1855);">-0.2</div>
<div class="t" style="left:109.20px;top:506.59px;font-size:11.8px;line-height:11.8px;font-weight:normal;color:#2e3436;transform:scaleX(1.1855);">-0.1</div>
<div class="t" style="left:112.00px;top:479.54px;font-size:12px;line-height:12px;font-weight:bold;color:#2e3436;transform:scaleX(1.2824);">0.0</div>
<div class="t" style="left:114.80px;top:452.83px;font-size:11.8px;line-height:11.8px;font-weight:normal;color:#2e3436;transform:scaleX(1.1276);">0.1</div>
<div class="t" style="left:114.80px;top:425.95px;font-size:11.8px;line-height:11.8px;font-weight:normal;color:#2e3436;transform:scaleX(1.1276);">0.2</div>
<div class="t" style="left:114.80px;top:399.07px;font-size:11.8px;line-height:11.8px;font-weight:normal;color:#2e3436;transform:scaleX(1.1276);">0.3</div>
<div class="t" style="left:114.80px;top:372.19px;font-size:11.8px;line-height:11.8px;font-weight:normal;color:#2e3436;transform:scaleX(1.1276);">0.4</div>
<div class="t" style="left:112.00px;top:345.14px;font-size:12px;line-height:12px;font-weight:bold;color:#2e3436;transform:scaleX(1.2824);">0.5</div>
<div class="t" style="left:114.80px;top:318.43px;font-size:11.8px;line-height:11.8px;font-weight:normal;color:#2e3436;transform:scaleX(1.1276);">0.6</div>
<div class="t" style="left:114.80px;top:291.55px;font-size:11.8px;line-height:11.8px;font-weight:normal;color:#2e3436;transform:scaleX(1.1276);">0.7</div>
<div class="t" style="left:114.80px;top:264.67px;font-size:11.8px;line-height:11.8px;font-weight:normal;color:#2e3436;transform:scaleX(1.1276);">0.8</div>
<div class="t" style="left:114.80px;top:237.79px;font-size:11.8px;line-height:11.8px;font-weight:normal;color:#2e3436;transform:scaleX(1.1276);">0.9</div>
<div class="t" style="left:112.00px;top:218.24px;font-size:12px;line-height:12px;font-weight:bold;color:#2e3436;transform:scaleX(1.2824);">1.0</div>
<div class="a" style="left:140px;top:216px;width:1269px;height:538px;background:#c1c1c1"></div>
<div class="a" style="left:140px;top:761px;width:1269px;height:15px;background:#c1c1c1"></div>
<div class="a" style="left:140px;top:755px;width:1269px;height:5px;background:#636a8a"></div>
<div class="a" style="left:140px;top:484.5px;width:1269px;height:1.5px;background:#111"></div>
<svg style="left:0;top:0" width="1415" height="779"><path d="M140.5 436V442M141.5 441V454M142.5 453V466M143.5 465V478M144.5 475V481M145.5 467V476M146.5 454V468M147.5 440V455M148.5 436V441M149.5 432V437M150.5 435V447M151.5 446V458M152.5 457V469M153.5 468V474M154.5 463V471M155.5 453V464M156.5 441V454M157.5 437V442M158.5 434V438M159.5 434V447M160.5 446V459M161.5 458V470M162.5 469V477M163.5 467V475M164.5 457V468M165.5 445V458M166.5 438V446M167.5 435V439M168.5 435V444M169.5 443V455M170.5 454V464M171.5 463V473M172.5 465V472M173.5 458V466M174.5 447V459M175.5 441V448M176.5 439V442M177.5 438V446M178.5 445V458M179.5 457V468M180.5 467V479M181.5 471V480M182.5 463V472M183.5 451V464M184.5 441V452M185.5 438V442M186.5 437V442M187.5 441V453M188.5 452V463M189.5 462V473M190.5 469V475M191.5 462V470M192.5 451V463M193.5 440V452M194.5 438V441M195.5 437V440M196.5 439V450M197.5 449V460M198.5 459V470M199.5 469V474M200.5 462V470M201.5 452V463M202.5 442V453M203.5 439V443M204.5 438V440M205.5 438V450M206.5 449V460M207.5 459V470M208.5 469V477M209.5 465V474M210.5 455V466M211.5 444V456M212.5 439V445M213.5 438V440M214.5 438V448M215.5 447V459M216.5 458V470M217.5 469V478M218.5 467V477M219.5 457V468M220.5 444V458M221.5 437V445M222.5 437V438M223.5 437V446M224.5 445V460M225.5 459V472M226.5 471V484M227.5 474V485M228.5 464V475M229.5 451V465M230.5 440V452M231.5 439V441M232.5 438V444M233.5 443V454M234.5 453V464M235.5 463V473M236.5 468V476M237.5 458V469M238.5 447V459M239.5 435V448M240.5 435V436M241.5 435V439M242.5 438V451M243.5 450V462M244.5 461V472M245.5 471V477M246.5 460V472M247.5 448V461M248.5 436V449M249.5 434V437M250.5 434V436M251.5 435V449M252.5 448V462M253.5 461V472M254.5 471V479M255.5 464V476M256.5 452V465M257.5 439V453M258.5 435V440M259.5 435V437M260.5 436V447M261.5 446V459M262.5 458V469M263.5 468V478M264.5 465V476M265.5 453V466M266.5 441V454M267.5 434V442M268.5 434V436M269.5 435V443M270.5 442V456M271.5 455V465M272.5 464V474M273.5 465V475M274.5 456V466M275.5 445V457M276.5 437V446M277.5 437V440M278.5 439V446M279.5 445V458M280.5 457V468M281.5 467V476M282.5 470V479M283.5 458V471M284.5 446V459M285.5 434V447M286.5 434V437M287.5 436V442M288.5 441V457M289.5 456V469M290.5 468V479M291.5 476V484M292.5 463V477M293.5 449V464M294.5 434V450M295.5 432V435M296.5 433V436M297.5 435V449M298.5 448V462M299.5 461V472M300.5 471V478M301.5 463V475M302.5 453V464M303.5 442V454M304.5 438V443M305.5 439V443M306.5 442V454M307.5 453V466M308.5 465V474M309.5 473V481M310.5 466V480M311.5 453V467M312.5 439V454M313.5 432V440M314.5 433V437M315.5 436V447M316.5 446V461M317.5 460V471M318.5 470V480M319.5 468V481M320.5 456V469M321.5 443V457M322.5 432V444M323.5 433V438M324.5 437V446M325.5 445V461M326.5 460V472M327.5 471V480M328.5 473V483M329.5 460V474M330.5 447V461M331.5 434V448M332.5 434V439M333.5 438V444M334.5 443V458M335.5 457V470M336.5 469V477M337.5 473V481M338.5 460V474M339.5 446V461M340.5 432V447M341.5 430V434M342.5 433V438M343.5 437V453M344.5 452V466M345.5 465V473M346.5 472V478M347.5 461V474M348.5 448V462M349.5 436V449M350.5 431V437M351.5 434V439M352.5 438V451M353.5 450V464M354.5 463V471M355.5 470V477M356.5 462V475M357.5 449V463M358.5 436V450M359.5 429V437M360.5 431V437M361.5 436V447M362.5 446V460M363.5 459V468M364.5 467V475M365.5 463V475M366.5 451V464M367.5 438V452M368.5 429V439M369.5 430V436M370.5 435V445M371.5 444V458M372.5 457V468M373.5 467V474M374.5 466V475M375.5 454V467M376.5 443V455M377.5 431V444M378.5 431V439M379.5 438V446M380.5 445V461M381.5 460V472M382.5 471V477M383.5 472V480M384.5 457V473M385.5 443V458M386.5 428V444M387.5 426V432M388.5 431V438M389.5 437V453M390.5 452V466M391.5 465V471M392.5 470V475M393.5 458V471M394.5 446V459M395.5 434V447M396.5 429V435M397.5 434V441M398.5 440V453M399.5 452V467M400.5 466V472M401.5 471V476M402.5 461V475M403.5 448V462M404.5 435V449M405.5 428V436M406.5 432V440M407.5 439V452M408.5 451V467M409.5 466V474M410.5 473V479M411.5 465V480M412.5 451V466M413.5 437V452M414.5 427V438M415.5 429V437M416.5 436V447M417.5 446V461M418.5 460V469M419.5 468V473M420.5 464V474M421.5 450V465M422.5 437V451M423.5 425V438M424.5 425V434M425.5 433V443M426.5 442V457M427.5 456V467M428.5 466V471M429.5 466V473M430.5 455V467M431.5 443V456M432.5 432V444M433.5 431V439M434.5 438V447M435.5 446V461M436.5 460V474M437.5 473V477M438.5 473V479M439.5 459V474M440.5 445V460M441.5 431V446M442.5 427V433M443.5 432V441M444.5 440V453M445.5 452V467M446.5 466V470M447.5 469V473M448.5 459V472M449.5 447V460M450.5 437V448M451.5 431V438M452.5 435V444M453.5 443V455M454.5 454V468M455.5 467V473M456.5 472V475M457.5 462V476M458.5 449V463M459.5 436V450M460.5 427V437M461.5 429V439M462.5 438V450M463.5 449V464M464.5 463V471M465.5 470V474M466.5 464V474M467.5 451V465M468.5 439V452M469.5 428V440M470.5 428V438M471.5 437V448M472.5 447V460M473.5 459V469M474.5 468V470M475.5 463V471M476.5 450V464M477.5 438V451M478.5 426V439M479.5 425V435M480.5 434V446M481.5 445V461M482.5 460V474M483.5 473V475M484.5 470V476M485.5 454V471M486.5 440V455M487.5 426V441M488.5 421V429M489.5 428V441M490.5 440V455M491.5 454V470M492.5 469V472M493.5 471V473M494.5 456V472M495.5 442V457M496.5 430V443M497.5 423V431M498.5 428V440M499.5 439V453M500.5 452V468M501.5 467V472M502.5 471V472M503.5 458V472M504.5 444V459M505.5 431V445M506.5 422V432M507.5 425V439M508.5 438V453M509.5 452V469M510.5 468V476M511.5 475V476M512.5 463V476M513.5 447V464M514.5 433V448M515.5 420V434M516.5 420V434M517.5 433V448M518.5 447V463M519.5 462V473M520.5 472V474M521.5 465V474M522.5 450V466M523.5 437V451M524.5 425V438M525.5 423V434M526.5 433V446M527.5 445V460M528.5 459V472M529.5 471V472M530.5 466V472M531.5 453V467M532.5 442V454M533.5 431V443M534.5 428V437M535.5 436V449M536.5 448V463M537.5 462V477M538.5 475V478M539.5 471V476M540.5 455V472M541.5 439V456M542.5 427V440M543.5 420V428M544.5 426V440M545.5 439V455M546.5 454V470M547.5 469V474M548.5 470V473M549.5 456V471M550.5 441V457M551.5 430V442M552.5 422V431M553.5 425V441M554.5 440V456M555.5 455V472M556.5 471V479M557.5 476V479M558.5 465V477M559.5 449V466M560.5 438V450M561.5 428V439M562.5 428V441M563.5 440V453M564.5 452V466M565.5 465V474M566.5 470V474M567.5 462V471M568.5 448V463M569.5 438V449M570.5 428V439M571.5 427V438M572.5 437V449M573.5 448V462M574.5 461V473M575.5 470V473M576.5 464V471M577.5 451V465M578.5 440V452M579.5 432V441M580.5 429V437M581.5 436V449M582.5 448V462M583.5 461V475M584.5 471V475M585.5 465V472M586.5 450V466M587.5 436V451M588.5 426V437M589.5 421V427M590.5 426V440M591.5 439V454M592.5 453V468M593.5 467V472M594.5 466V470M595.5 454V467M596.5 442V455M597.5 435V443M598.5 430V436M599.5 432V445M600.5 444V456M601.5 455V469M602.5 468V474M603.5 467V472M604.5 456V468M605.5 442V457M606.5 434V443M607.5 427V435M608.5 428V442M609.5 441V456M610.5 455V470M611.5 469V479M612.5 473V478M613.5 463V474M614.5 449V464M615.5 439V450M616.5 431V440M617.5 430V442M618.5 441V456M619.5 455V470M620.5 469V482M621.5 474V481M622.5 464V475M623.5 447V465M624.5 433V448M625.5 424V434M626.5 421V431M627.5 430V446M628.5 445V460M629.5 459V475M630.5 470V476M631.5 464V471M632.5 450V465M633.5 438V451M634.5 431V439M635.5 427V435M636.5 434V449M637.5 448V463M638.5 462V477M639.5 475V481M640.5 469V476M641.5 454V470M642.5 439V455M643.5 432V440M644.5 427V433M645.5 430V445M646.5 444V458M647.5 457V472M648.5 471V478M649.5 467V474M650.5 453V468M651.5 438V454M652.5 431V439M653.5 425V432M654.5 425V442M655.5 441V458M656.5 457V474M657.5 473V485M658.5 473V482M659.5 460V474M660.5 443V461M661.5 432V444M662.5 425V433M663.5 424V436M664.5 435V450M665.5 449V464M666.5 463V476M667.5 467V475M668.5 458V468M669.5 444V459M670.5 435V445M671.5 430V436M672.5 428V438M673.5 437V453M674.5 452V467M675.5 466V481M676.5 473V481M677.5 464V474M678.5 449V465M679.5 436V450M680.5 431V437M681.5 428V436M682.5 435V451M683.5 450V465M684.5 464V480M685.5 476V483M686.5 468V477M687.5 454V469M688.5 439V455M689.5 434V440M690.5 431V436M691.5 435V451M692.5 450V466M693.5 465V480M694.5 479V486M695.5 470V481M696.5 455V471M697.5 438V456M698.5 432V439M699.5 427V433M700.5 428V446M701.5 445V462M702.5 461V478M703.5 477V488M704.5 473V484M705.5 460V474M706.5 442V461M707.5 434V443M708.5 429V435M709.5 428V441M710.5 440V455M711.5 454V468M712.5 467V479M713.5 466V477M714.5 455V467M715.5 438V456M716.5 429V439M717.5 426V430M718.5 425V437M719.5 436V455M720.5 454V472M721.5 471V488M722.5 476V488M723.5 464V477M724.5 445V465M725.5 431V446M726.5 427V432M727.5 424V432M728.5 431V448M729.5 447V463M730.5 462V478M731.5 473V481M732.5 462V474M733.5 447V463M734.5 433V448M735.5 431V434M736.5 429V434M737.5 433V450M738.5 449V466M739.5 465V481M740.5 479V487M741.5 468V480M742.5 452V469M743.5 435V453M744.5 431V436M745.5 428V432M746.5 429V445M747.5 444V460M748.5 459V474M749.5 473V483M750.5 467V479M751.5 454V468M752.5 439V455M753.5 433V440M754.5 432V434M755.5 432V445M756.5 444V460M757.5 459V473M758.5 472V484M759.5 469V482M760.5 455V470M761.5 438V456M762.5 429V439M763.5 428V430M764.5 428V439M765.5 438V457M766.5 456V472M767.5 471V486M768.5 473V487M769.5 459V474M770.5 442V460M771.5 429V443M772.5 428V430M773.5 427V435M774.5 434V452M775.5 451V467M776.5 466V481M777.5 473V484M778.5 459V474M779.5 443V460M780.5 427V444M781.5 427V428M782.5 427V432M783.5 431V450M784.5 449V466M785.5 465V481M786.5 478V487M787.5 464V479M788.5 447V465M789.5 430V448M790.5 428V431M791.5 428V430M792.5 429V447M793.5 446V464M794.5 463V478M795.5 477V487M796.5 466V481M797.5 450V467M798.5 433V451M799.5 428V434M800.5 428V430M801.5 429V445M802.5 444V462M803.5 461V476M804.5 475V488M805.5 469V485M806.5 453V470M807.5 435V454M808.5 426V436M809.5 427V429M810.5 428V441M811.5 440V458M812.5 457V473M813.5 472V486M814.5 472V487M815.5 456V473M816.5 439V457M817.5 427V440M818.5 427V430M819.5 429V439M820.5 438V456M821.5 455V470M822.5 469V483M823.5 473V486M824.5 458V474M825.5 442V459M826.5 426V443M827.5 426V429M828.5 428V435M829.5 434V453M830.5 452V468M831.5 467V480M832.5 476V485M833.5 462V477M834.5 446V463M835.5 430V447M836.5 428V431M837.5 430V433M838.5 432V448M839.5 447V463M840.5 462V473M841.5 472V479M842.5 459V474M843.5 444V460M844.5 429V445M845.5 424V430M846.5 426V430M847.5 429V445M848.5 444V462M849.5 461V473M850.5 472V482M851.5 465V480M852.5 451V466M853.5 436V452M854.5 429V437M855.5 430V433M856.5 432V443M857.5 442V457M858.5 456V467M859.5 466V475M860.5 462V476M861.5 450V463M862.5 436V451M863.5 426V437M864.5 427V431M865.5 430V440M866.5 439V454M867.5 453V465M868.5 464V473M869.5 464V475M870.5 450V465M871.5 435V451M872.5 422V436M873.5 422V428M874.5 427V435M875.5 434V452M876.5 451V465M877.5 464V474M878.5 470V478M879.5 456V471M880.5 442V457M881.5 427V443M882.5 426V430M883.5 429V435M884.5 434V449M885.5 448V462M886.5 461V470M887.5 469V475M888.5 457V470M889.5 444V458M890.5 430V445M891.5 426V431M892.5 429V436M893.5 435V449M894.5 448V465M895.5 464V472M896.5 471V479M897.5 459V476M898.5 443V460M899.5 427V444M900.5 419V428M901.5 421V428M902.5 427V441M903.5 440V458M904.5 457V468M905.5 467V476M906.5 462V476M907.5 448V463M908.5 433V449M909.5 423V434M910.5 424V430M911.5 429V439M912.5 438V453M913.5 452V462M914.5 461V468M915.5 459V469M916.5 447V460M917.5 435V448M918.5 423V436M919.5 424V431M920.5 430V439M921.5 438V453M922.5 452V464M923.5 463V470M924.5 463V472M925.5 449V464M926.5 435V450M927.5 421V436M928.5 419V426M929.5 425V434M930.5 433V451M931.5 450V466M932.5 465V472M933.5 470V476M934.5 453V471M935.5 437V454M936.5 421V438M937.5 416V422M938.5 421V429M939.5 428V443M940.5 442V459M941.5 458V465M942.5 464V470M943.5 452V468M944.5 438V453M945.5 425V439M946.5 418V426M947.5 421V429M948.5 428V441M949.5 440V455M950.5 454V462M951.5 461V467M952.5 454V467M953.5 442V455M954.5 430V443M955.5 422V431M956.5 424V433M957.5 432V443M958.5 442V458M959.5 457V466M960.5 465V470M961.5 459V471M962.5 444V460M963.5 430V445M964.5 418V431M965.5 418V427M966.5 426V437M967.5 436V452M968.5 451V463M969.5 462V467M970.5 460V469M971.5 446V461M972.5 433V447M973.5 420V434M974.5 419V426M975.5 425V434M976.5 433V447M977.5 446V459M978.5 458V462M979.5 459V464M980.5 447V460M981.5 435V448M982.5 423V436M983.5 420V426M984.5 425V435M985.5 434V448M986.5 447V462M987.5 461V464M988.5 463V467M989.5 448V464M990.5 434V449M991.5 420V435M992.5 413V421M993.5 418V429M994.5 428V442M995.5 441V458M996.5 457V464M997.5 463V467M998.5 453V467M999.5 438V454M1000.5 425V439M1001.5 416V426M1002.5 419V428M1003.5 427V439M1004.5 438V452M1005.5 451V458M1006.5 457V460M1007.5 449V461M1008.5 436V450M1009.5 423V437M1010.5 412V424M1011.5 413V425M1012.5 424V437M1013.5 436V453M1014.5 452V464M1015.5 463V466M1016.5 459V468M1017.5 445V460M1018.5 432V446M1019.5 419V433M1020.5 418V427M1021.5 426V436M1022.5 435V449M1023.5 448V459M1024.5 458V461M1025.5 456V461M1026.5 443V457M1027.5 431V444M1028.5 420V432M1029.5 417V424M1030.5 423V435M1031.5 434V448M1032.5 447V462M1033.5 461V463M1034.5 461V464M1035.5 448V462M1036.5 436V449M1037.5 424V437M1038.5 418V425M1039.5 423V435M1040.5 434V447M1041.5 446V460M1042.5 459V463M1043.5 462V464M1044.5 451V464M1045.5 438V452M1046.5 427V439M1047.5 419V428M1048.5 422V432M1049.5 431V442M1050.5 441V454M1051.5 453V459M1052.5 457V458M1053.5 447V458M1054.5 433V448M1055.5 421V434M1056.5 411V422M1057.5 412V425M1058.5 424V437M1059.5 436V451M1060.5 450V460M1061.5 459V460M1062.5 452V460M1063.5 439V453M1064.5 428V440M1065.5 417V429M1066.5 416V428M1067.5 427V440M1068.5 439V455M1069.5 454V466M1070.5 464V466M1071.5 458V465M1072.5 442V459M1073.5 428V443M1074.5 415V429M1075.5 411V421M1076.5 420V433M1077.5 432V447M1078.5 446V462M1079.5 460V462M1080.5 457V461M1081.5 443V458M1082.5 430V444M1083.5 419V431M1084.5 414V420M1085.5 419V432M1086.5 431V444M1087.5 443V457M1088.5 456V460M1089.5 456V459M1090.5 442V457M1091.5 428V443M1092.5 418V429M1093.5 410V419M1094.5 414V427M1095.5 426V440M1096.5 439V453M1097.5 452V459M1098.5 455V458M1099.5 444V456M1100.5 430V445M1101.5 420V431M1102.5 411V421M1103.5 412V426M1104.5 425V440M1105.5 439V455M1106.5 454V464M1107.5 461V463M1108.5 452V462M1109.5 438V453M1110.5 428V439M1111.5 419V429M1112.5 417V430M1113.5 429V443M1114.5 442V457M1115.5 456V468M1116.5 464V468M1117.5 456V465M1118.5 440V457M1119.5 427V441M1120.5 416V428M1121.5 413V423M1122.5 422V435M1123.5 434V449M1124.5 448V463M1125.5 460V463M1126.5 456V461M1127.5 443V457M1128.5 431V444M1129.5 423V432M1130.5 419V426M1131.5 425V437M1132.5 436V450M1133.5 449V463M1134.5 462V466M1135.5 459V463M1136.5 447V460M1137.5 434V448M1138.5 426V435M1139.5 421V427M1140.5 424V438M1141.5 437V451M1142.5 450V464M1143.5 463V470M1144.5 463V467M1145.5 451V464M1146.5 437V452M1147.5 429V438M1148.5 422V430M1149.5 423V436M1150.5 435V449M1151.5 448V462M1152.5 461V470M1153.5 463V468M1154.5 452V464M1155.5 438V453M1156.5 428V439M1157.5 420V429M1158.5 419V432M1159.5 431V446M1160.5 445V460M1161.5 459V471M1162.5 464V470M1163.5 455V465M1164.5 440V456M1165.5 428V441M1166.5 420V429M1167.5 417V428M1168.5 427V441M1169.5 440V455M1170.5 454V469M1171.5 463V469M1172.5 456V464M1173.5 440V457M1174.5 427V441M1175.5 420V428M1176.5 416V424M1177.5 423V439M1178.5 438V454M1179.5 453V470M1180.5 467V473M1181.5 462V468M1182.5 447V463M1183.5 433V448M1184.5 426V434M1185.5 421V427M1186.5 424V438M1187.5 437V451M1188.5 450V464M1189.5 463V469M1190.5 458V465M1191.5 444V459M1192.5 429V445M1193.5 422V430M1194.5 416V423M1195.5 417V433M1196.5 432V448M1197.5 447V463M1198.5 462V472M1199.5 463V470M1200.5 452V464M1201.5 438V453M1202.5 430V439M1203.5 424V431M1204.5 423V437M1205.5 436V451M1206.5 450V464M1207.5 463V475M1208.5 466V474M1209.5 455V467M1210.5 439V456M1211.5 428V440M1212.5 422V429M1213.5 420V431M1214.5 430V446M1215.5 445V460M1216.5 459V475M1217.5 466V475M1218.5 456V467M1219.5 440V457M1220.5 426V441M1221.5 421V427M1222.5 418V426M1223.5 425V441M1224.5 440V456M1225.5 455V471M1226.5 467V474M1227.5 460V468M1228.5 446V461M1229.5 433V447M1230.5 428V434M1231.5 424V429M1232.5 428V440M1233.5 439V452M1234.5 451V463M1235.5 462V468M1236.5 455V464M1237.5 444V456M1238.5 431V445M1239.5 427V432M1240.5 423V428M1241.5 424V439M1242.5 438V452M1243.5 451V465M1244.5 464V473M1245.5 459V469M1246.5 446V460M1247.5 430V447M1248.5 422V431M1249.5 418V423M1250.5 418V433M1251.5 432V448M1252.5 447V463M1253.5 462V474M1254.5 463V473M1255.5 452V464M1256.5 437V453M1257.5 428V438M1258.5 425V429M1259.5 424V435M1260.5 434V449M1261.5 448V463M1262.5 462V476M1263.5 465V476M1264.5 453V466M1265.5 436V454M1266.5 424V437M1267.5 420V425M1268.5 418V426M1269.5 425V440M1270.5 439V454M1271.5 453V467M1272.5 461V470M1273.5 452V462M1274.5 438V453M1275.5 425V439M1276.5 422V426M1277.5 420V425M1278.5 424V440M1279.5 439V454M1280.5 453V466M1281.5 465V472M1282.5 455V466M1283.5 442V456M1284.5 427V443M1285.5 425V428M1286.5 423V426M1287.5 425V441M1288.5 440V457M1289.5 456V470M1290.5 469V479M1291.5 463V475M1292.5 451V464M1293.5 436V452M1294.5 430V437M1295.5 429V431M1296.5 428V442M1297.5 441V455M1298.5 454V468M1299.5 467V477M1300.5 463V475M1301.5 450V464M1302.5 435V451M1303.5 427V436M1304.5 425V428M1305.5 425V436M1306.5 435V451M1307.5 450V464M1308.5 463V477M1309.5 464V477M1310.5 451V465M1311.5 435V452M1312.5 423V436M1313.5 421V424M1314.5 421V429M1315.5 428V443M1316.5 442V456M1317.5 455V468M1318.5 461V471M1319.5 449V462M1320.5 435V450M1321.5 423V436M1322.5 423V424M1323.5 423V429M1324.5 428V446M1325.5 445V461M1326.5 460V475M1327.5 472V481M1328.5 458V473M1329.5 442V459M1330.5 425V443M1331.5 424V426M1332.5 424V426M1333.5 425V442M1334.5 441V457M1335.5 456V471M1336.5 470V479M1337.5 461V474M1338.5 448V462M1339.5 433V449M1340.5 430V434M1341.5 430V431M1342.5 430V443M1343.5 442V456M1344.5 455V467M1345.5 466V475M1346.5 460V473M1347.5 448V461M1348.5 434V449M1349.5 428V435M1350.5 428V430M1351.5 429V441M1352.5 440V455M1353.5 454V467M1354.5 466V478M1355.5 463V478M1356.5 449V464M1357.5 433V450M1358.5 422V434M1359.5 422V425M1360.5 424V433M1361.5 432V450M1362.5 449V464M1363.5 463V476M1364.5 468V479M1365.5 455V469M1366.5 441V456M1367.5 429V442M1368.5 429V431M1369.5 430V436M1370.5 435V450M1371.5 449V462M1372.5 461V472M1373.5 467V476M1374.5 455V468M1375.5 441V456M1376.5 427V442M1377.5 426V429M1378.5 428V432M1379.5 431V448M1380.5 447V462M1381.5 461V472M1382.5 471V479M1383.5 459V473M1384.5 445V460M1385.5 431V446M1386.5 426V432M1387.5 428V431M1388.5 430V444M1389.5 443V458M1390.5 457V468M1391.5 467V475M1392.5 459V473M1393.5 446V460M1394.5 432V447M1395.5 425V433M1396.5 427V431M1397.5 430V442M1398.5 441V457M1399.5 456V467M1400.5 466V476M1401.5 461V476M1402.5 446V462M1403.5 431V447M1404.5 421V432M1405.5 422V426M1406.5 425V436M1407.5 435V452M1408.5 451V464" fill="none" stroke="#3232c8" stroke-width="1" shape-rendering="crispEdges"/></svg>
<div class="a" style="left:140px;top:766.5px;width:1269px;height:1.5px;background:#3a3ad0"></div>
<div class="a" style="left:140px;top:766.5px;width:1269px;height:1.5px;background:repeating-linear-gradient(to right,#111 0 3px,transparent 3px 9px)"></div>
<div class="a" style="left:934.5px;top:216px;width:1px;height:560px;background:#2a0808"></div>
<div class="a" style="left:1413px;top:168px;width:1px;height:41px;background:#bdbdbd"></div>
<div class="a" style="left:1414px;top:168px;width:1px;height:41px;background:#f6f7fc"></div>
<svg style="left:0;top:0" width="1415" height="10"><path d="M0,0 H5 Q1.5,1.5 0,5 Z" fill="#111"/><path d="M1415,0 H1410 Q1413.5,1.5 1415,5 Z" fill="#111"/></svg>
</body></html>
